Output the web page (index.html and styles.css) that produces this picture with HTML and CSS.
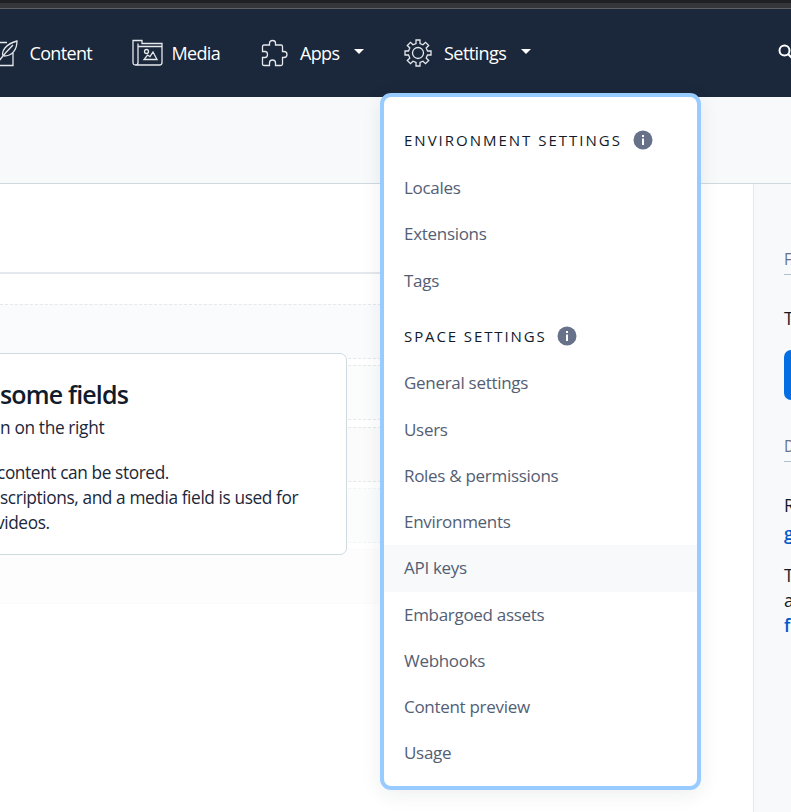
FILE: index.html
```html
<!DOCTYPE html>
<html lang="en">
<head>
<meta charset="utf-8">
<title>Content model</title>
<link rel="stylesheet" href="styles.css">
</head>
<body>
<div class="chrome"></div>
<header class="nav">
  <a class="nav-item content">
    <svg class="icon" width="28" height="28" viewBox="0 0 28 28"><path d="M17 3.500H1M23 14v12.500H1M9 22C12 18 17 12 23 6M13 17C11 12 16 5 27 2C27 11 22 17 14 17"/></svg>
    <span>Content</span>
  </a>
  <a class="nav-item media">
    <svg class="icon" width="31" height="28" viewBox="0 0 31 28"><path d="M6 4.500V23.500Q6 26 3.500 26Q1 26 1 23.500V1.500H10V4.500H30V23.500Q30 26 27.500 26H3.500M6 7.500H30M12 20.500H25L21 13L18 17.500L15.500 16Z"/><circle cx="14.500" cy="12.500" r="2"/></svg>
    <span>Media</span>
  </a>
  <a class="nav-item apps">
    <svg class="icon" width="27" height="28" viewBox="0 0 27 28"><path d="M1.500 7.500Q1.500 6 3 6H8.500V4Q8.500 1.500 11.500 1.500Q14.500 1.500 14.500 4V6H20Q21.500 6 21.500 7.500V12.500H23Q26 12.500 26 15.500Q26 18.500 23 18.500H21.500V25Q21.500 26.500 20 26.500H14.500V24Q14.500 21 11.500 21Q8.500 21 8.500 24V26.500H3Q1.500 26.500 1.500 25V18.500H4Q6.500 18.500 6.500 15.500Q6.500 12.500 4 12.500H1.500Z"/></svg>
    <span>Apps</span><i class="caret"></i>
  </a>
  <a class="nav-item settings">
    <svg class="icon" width="28" height="28" viewBox="0 0 28 28"><path d="M12 1H16V4.500L19 5.800L21.500 3.300L24.700 6.500L22.200 9L23.500 12H27V16H23.500L22.200 19L24.700 21.500L21.500 24.700L19 22.200L16 23.500V27H12V23.500L9 22.200L6.500 24.700L3.300 21.500L5.800 19L4.500 16H1V12H4.500L5.800 9L3.300 6.500L6.500 3.300L9 5.800L12 4.500Z"/><circle cx="14" cy="14" r="5.500"/></svg>
    <span>Settings</span><i class="caret"></i>
  </a>
  <svg class="search" width="18" height="18" viewBox="0 0 18 18"><circle cx="6.500" cy="6.500" r="5"/><path d="M10 10L15 15"/></svg>
</header>
<div class="subheader"></div>
<main class="workspace">
  <section class="fields">
    <div class="tabs"></div>
    <div class="rows"><div class="row blue"></div><div class="row green"></div><div class="row grey"></div><div class="row green faint"></div><div class="row grey fainter"></div></div>
    <article class="card">
      <h2>some fields</h2>
      <p class="hint">n on the right</p>
      <p class="line l1">content can be stored.</p>
      <p class="line l2">scriptions, and a media field is used for</p>
      <p class="line l3">videos.</p>
    </article>
  </section>
  <aside class="sidebar">
    <h3>F</h3>
    <p class="fields-used">T</p>
    <div class="button"></div>
    <h3>D</h3>
    <p class="read">R<br><a>g</a></p>
    <p class="more">T<br>a<br><a>f</a></p>
  </aside>
</main>
<nav class="menu">
  <h4 class="first"><span class="env">ENVIRONMENT SETTINGS</span><svg width="20" height="20" viewBox="0 0 20 20"><circle cx="10" cy="10" r="9.500"/><path d="M9 5h2v2H9zM9 8.500h2V15H9z"/></svg></h4>
  <a>Locales</a>
  <a>Extensions</a>
  <a>Tags</a>
  <h4><span class="space">SPACE SETTINGS</span><svg width="20" height="20" viewBox="0 0 20 20"><circle cx="10" cy="10" r="9.500"/><path d="M9 5h2v2H9zM9 8.500h2V15H9z"/></svg></h4>
  <a>General settings</a>
  <a>Users</a>
  <a class="roles">Roles &amp; permissions</a>
  <a>Environments</a>
  <a class="active">API keys</a>
  <a>Embargoed assets</a>
  <a>Webhooks</a>
  <a>Content preview</a>
  <a>Usage</a>
</nav>
</body>
</html>
```
FILE: styles.css
```css
* { box-sizing: border-box; }
body { margin: 0; width: 791px; height: 812px; overflow: hidden; position: relative; background: #fff; font-family: "Open Sans", "Noto Sans", sans-serif; font-size: 17px; color: #1b273a; }
h2, h3, h4, p { margin: 0; font-weight: 400; }
.chrome { height: 9px; background: #35363a; border-top: 3px solid #202124; border-bottom: 1px solid #606164; }
.nav { height: 88px; background: #1b273a; color: #fff; display: flex; align-items: center; overflow: hidden; }
.nav-item { display: flex; align-items: center; flex: none; height: 28px; font-size: 18px; letter-spacing: -0.65px; white-space: nowrap; }
.icon { fill: none; stroke: #e5e8ec; stroke-width: 1.3; flex: none; }
.content { margin-left: -10px; width: 141.500px; gap: 11.500px; }
.media { width: 129.500px; gap: 9px; }
.apps { width: 143px; gap: 12px; }
.settings { width: 374px; gap: 12px; letter-spacing: -0.550px; }
.caret { border: 5px solid transparent; border-top-color: #fff; border-bottom: 0; margin: -4px 0 0 3px; }
.search { flex: none; fill: none; stroke: #fff; stroke-width: 2; }
.subheader { height: 87px; background: #f7f9fa; border-bottom: 1px solid #cfd9e0; }
.workspace { height: 628px; display: grid; grid-template-columns: 753px 38px; }
.fields { display: grid; grid-template-rows: 90px 538px; }
.tabs { width: 400px; border-bottom: 2px solid #e5e8ec; }
.rows, .card { grid-row: 2; grid-column: 1; }
.rows { padding-top: 30px; width: 381px; }
.row { height: 55px; margin-bottom: 6.300px; border: dashed #e5e8ec; border-width: 1px 0; }
.blue { background: #fafbfd; }
.green { background: #fbfdfd; }
.grey { background: #fbfbfb; }
.faint { border-color: #f2f4f5; }
.fainter { background: #fdfdfd; border-color: #fafafa; }
.card { margin: 79px 0 0 -10px; width: 357px; height: 202px; padding: 23px 0 0 9px; background: #fff; border: 1px solid #cfd9e0; border-radius: 7px; white-space: nowrap; }
.card h2 { font-size: 25px; line-height: 34px; font-weight: 600; letter-spacing: -0.85px; color: #111b2b; }
.card p { font-size: 17.300px; line-height: 25px; letter-spacing: -0.400px; }
.card .hint { margin-top: 4px; letter-spacing: -0.350px; }
.card .l1 { margin: 20px 0 0 -3px; }
.card .l3 { margin-left: -4px; }
.sidebar { background: #f7f9fa; border-left: 1px solid #e5e8ec; padding: 63px 0 0 30px; overflow: hidden; }
.sidebar h3 { height: 28px; line-height: 24px; font-size: 15.500px; color: #67728a; border-bottom: 1px solid #aec1cc; }
.sidebar p { font-size: 17.500px; line-height: 25px; color: #111b2b; }
.sidebar a { color: #0059c8; font-weight: 600; }
.sidebar .fields-used { margin: 31px 0 19px; }
.button { width: 20px; height: 50px; border-radius: 7px; background: #036fe3; margin-bottom: 34px; }
.sidebar .read { margin-top: 29px; line-height: 28px; }
.sidebar .more { margin-top: 16px; }
.menu { position: absolute; left: 380px; top: 93px; width: 321px; height: 697px; border: 4px solid #98cbff; border-radius: 11px; background: #fff; box-shadow: 0 4px 20px rgba(25, 37, 50, .08); }
.menu h4 { height: 56.500px; padding: 7px 0 0 20px; display: flex; align-items: center; gap: 10px; font-size: 15px; font-weight: 500; letter-spacing: 1.900px; color: #111b2b; }
.menu .first { height: 68px; padding-top: 18px; letter-spacing: 2px; gap: 11px; }
.menu svg { fill: #67728a; flex: none; }
.menu svg path { fill: #fff; }
.menu a { display: block; height: 46.250px; line-height: 46px; padding-left: 20px; color: #535e74; font-size: 17px; letter-spacing: -0.300px; }
.menu .active { background: #f7f9fa; }
```
